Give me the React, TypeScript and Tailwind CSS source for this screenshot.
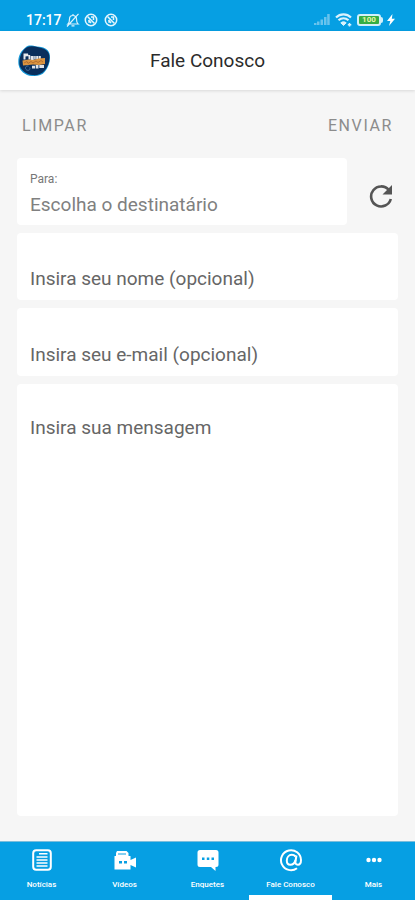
import type { ReactNode } from 'react';

interface NavItem {
  label: string;
  icon: ReactNode;
  active?: boolean;
}

const FIELD = 'block w-full rounded bg-white px-[13px] text-[19px] text-[#5a5a5a] placeholder:text-[#666666] outline-none';

const NAV_ITEMS: NavItem[] = [
  { label: 'Notícias', icon: <NewsIcon /> },
  { label: 'Vídeos', icon: <VideoIcon /> },
  { label: 'Enquetes', icon: <PollIcon /> },
  { label: 'Fale Conosco', icon: <AtIcon />, active: true },
  { label: 'Mais', icon: <MoreIcon /> },
];

export default function App() {
  return (
    <div className="flex min-h-screen flex-col bg-[#f6f6f6] font-['Roboto',sans-serif]">
      <StatusBar />
      <Header />
      <main className="flex flex-1 flex-col px-[17px] pb-[25px]">
        <ContactForm />
      </main>
      <BottomNav />
    </div>
  );
}

function StatusBar() {
  return (
    <div className="flex h-[31px] items-center justify-between bg-[#069fe3] pt-2 pr-5 pl-[26px] text-white">
      <div className="flex items-center gap-1">
        <span className="text-[14px] leading-4 font-medium">17:17</span>
        <BellOffIcon />
        <span className="flex gap-[6px]">
          <BlockedIcon />
          <BlockedIcon />
        </span>
      </div>
      <div className="flex items-center gap-[5px]">
        <svg viewBox="0 0 16 12" className="h-3 w-4" fill="#69c3ed" aria-hidden="true">
          <path d="M0 9h2.500v2H0zM3 7.500h2.500V11H3zM6.500 5.500H9V11H6.500zM10 3h2.500v8H10zM13.200 0H15.700v11h-2.500z" />
        </svg>
        <svg viewBox="0 0 17 14" className="h-[14px] w-[17px]" fill="none" stroke="#d9f2fd" aria-hidden="true">
          <path d="M1 4.500C5.300.4 11.700.4 16 4.500" strokeWidth="2.200" />
          <path d="M3.500 7.300c3-2.700 7-2.700 10 0" strokeWidth="2.200" />
          <path d="M5.800 9.800c1.800-1.400 3.600-1.400 5.400 0L8.500 12.500z" fill="#d9f2fd" strokeWidth="1" />
          <path d="M14.500 10v3.500M12.800 11.700h3.500" strokeWidth="1.500" />
        </svg>
        <span className="flex items-center gap-1">
          <span className="flex items-center">
            <span className="flex h-3 w-6 items-center justify-center rounded-[3px] border-2 border-[#d3f0fa] bg-[#35ae45] text-[8px] leading-none font-bold text-[#e9f7a5]">
              100
            </span>
            <span className="h-[6px] w-[2px] rounded-r bg-[#d3f0fa]" />
          </span>
          <svg viewBox="0 0 8 12" className="h-3 w-2" fill="#fff" aria-hidden="true">
            <path d="M5.500 0 0 7h3.300L2 12l6-7.200H4.800z" />
          </svg>
        </span>
      </div>
    </div>
  );
}

function Header() {
  return (
    <header className="grid h-[59px] grid-cols-[1fr_auto_1fr] items-center bg-white px-[18px] pt-px shadow-[0_1px_3px_rgba(0,0,0,0.12)]">
      <Logo />
      <h1 className="text-[19px] leading-6 text-[#2b2b2b]">Fale Conosco</h1>
    </header>
  );
}

function ContactForm() {
  return (
    <form className="flex flex-1 flex-col" onSubmit={(e) => e.preventDefault()}>
      <div className="flex h-[68px] items-center justify-between px-[5px] pt-[3px] text-[16px] text-[#8c8c8c]">
        <button type="reset" className="tracking-widest">LIMPAR</button>
        <button type="submit" className="tracking-widest">ENVIAR</button>
      </div>
      <div className="flex flex-1 flex-col gap-2">
        <div className="flex">
          <div className="flex h-[67px] flex-1 flex-col rounded bg-white px-[13px] pt-[13px]">
            <label htmlFor="recipient" className="text-[12px] leading-4 text-[#777777]">Para:</label>
            <select id="recipient" className="mt-1 h-7 w-full appearance-none bg-transparent text-[19px] text-[#808080] outline-none">
              <option>Escolha o destinatário</option>
            </select>
          </div>
          <button type="button" aria-label="Atualizar" className="flex w-[51px] items-center justify-end pt-2 pr-[5px]">
            <svg viewBox="0 0 24 24" className="size-6" fill="none" stroke="#555555" strokeWidth="2.600" aria-hidden="true">
              <path d="M19.800 6A10 10 0 1 0 21.800 15" />
              <path d="M23 1v9.500H13.500z" fill="#555555" stroke="none" />
            </svg>
          </button>
        </div>
        <input type="text" aria-label="Insira seu nome (opcional)" placeholder="Insira seu nome (opcional)" className={`${FIELD} h-[67px] pt-6`} />
        <input type="email" aria-label="Insira seu e-mail (opcional)" placeholder="Insira seu e-mail (opcional)" className={`${FIELD} h-[68px] pt-6`} />
        <textarea aria-label="Insira sua mensagem" placeholder="Insira sua mensagem" className={`${FIELD} flex-1 resize-none pt-8 leading-6`} />
      </div>
    </form>
  );
}

function BottomNav() {
  return (
    <nav className="grid h-[59px] grid-cols-5 border-t border-[#7bbddb] bg-[#069fe3] text-white">
      {NAV_ITEMS.map((item) => (
        <a
          key={item.label}
          href="#"
          aria-current={item.active ? 'page' : undefined}
          className={`flex flex-col items-center gap-2 border-b-[5px] pt-[6px] ${item.active ? 'border-white' : 'border-transparent'}`}
        >
          {item.icon}
          <span className="text-[8px] leading-[10px] font-medium whitespace-nowrap">{item.label}</span>
        </a>
      ))}
    </nav>
  );
}

function Logo() {
  return (
    <svg viewBox="0 0 32 32" className="size-8" role="img" aria-label="Logo">
      <path d="M8 2C11-.5 15 1 19 1.500c6 .5 11 2 12.500 7 1.500 6-.5 13-4.500 18-3 4-8 5-13 4.500C7 30.500 1.500 26 .5 19.500-.5 12 2.500 6 8 2z" fill="#1598d8" />
      <path d="M8.500 2.500c4-2 8-1 12-.2 5 .9 10 3 10.800 8 .8 6-1.300 11.500-4.800 15.500-3 3.400-7.500 4.800-12 4.300-6-.7-12-4.800-13-10.300C.8 13 3.500 6 8.500 2.500z" fill="#092e5c" />
      <path d="M5.500 8.500h4.500l.5 2.500-3 .5v3h-2zM10.500 10h1.700v4.500h-1.700zM12.700 11h3v4h-3zM16.200 11h1.500v3.500h-1.500zM18.200 11h1.800v3.500h-1.800zM20.500 11h2.300v3h-2.300z" fill="#e4e7ec" />
      <path d="m4.500 15.500 6-1 5 .5 5-1.500 6.500-.5v6l-6 1-6-.5-10 1z" fill="#dc9440" />
      <path d="m6 18 3-1.500 1 2 3-2 2 1.500 3-2 2 1.500 3-2 2 1.500" fill="none" stroke="#a8652d" strokeWidth=".8" />
      <path d="M14 20.700h3v2.800h-3zM17.700 20h2.800v3.500h-2.800zM21.300 20H26v3h-4.700z" fill="#e1e5ec" />
      <path d="M10.500 21c-3-.5-4 2.500-1.800 4 2 1 4-.5 3-2.500" fill="none" stroke="#4c76a0" />
    </svg>
  );
}

function BellOffIcon() {
  return (
    <svg viewBox="0 0 14 14" className="size-[14px]" fill="none" stroke="#e0f4fd" strokeWidth="1.200" aria-hidden="true">
      <path d="M2 11h10c-1.300-1-1.500-2.500-1.500-5a3.500 3.500 0 0 0-7 0c0 2.500-.2 4-1.500 5zM5.500 12.800h3M7 1v1.500M1 13.500 12.500.8" />
    </svg>
  );
}

function BlockedIcon() {
  return (
    <svg viewBox="0 0 14 14" className="size-[14px]" fill="none" stroke="#e5f6fd" aria-hidden="true">
      <circle cx="7" cy="7" r="5.700" strokeWidth="1.500" />
      <path d="m3.500 3.500 7 7M5 9.800V7M7 4h2.500v3M4.500 7l2.500 3" strokeWidth="1.500" />
    </svg>
  );
}

function NewsIcon() {
  return (
    <svg viewBox="0 0 22 24" className="h-6 w-[22px]" fill="none" stroke="#fff" aria-hidden="true">
      <rect x="2.200" y="2.200" width="17.600" height="19.600" rx="3" strokeWidth="2" />
      <path d="M8 5.700h8.500M5.500 9h11M5.500 12h11M5.500 15h11M5.500 18h11" strokeWidth="1.500" />
    </svg>
  );
}

function VideoIcon() {
  return (
    <svg viewBox="0 0 24 24" className="size-6" fill="#fff" aria-hidden="true">
      <path d="M4 3h9.500l2 2v3h2v4L23 9.500v10L17.500 17v4.500H1.500V8H3V5z" />
      <path d="M5 6h8" stroke="#069fe3" fill="none" />
      <path d="M6 13h3v2.500H6zM11 13h3v2.500h-3z" fill="#069fe3" />
    </svg>
  );
}

function PollIcon() {
  return (
    <svg viewBox="0 0 24 24" className="size-6" fill="#fff" aria-hidden="true">
      <path d="M4 2h16a2.500 2.500 0 0 1 2.500 2.500v12A2.500 2.500 0 0 1 20 19h-.5v4L15 19H4a2.500 2.500 0 0 1-2.500-2.500v-12A2.500 2.500 0 0 1 4 2z" />
      <path d="M6 9.500h2.500V12H6zM10.800 9.500h2.500V12h-2.500zM15.500 9.500H18V12h-2.500z" fill="#069fe3" />
    </svg>
  );
}

function AtIcon() {
  return (
    <svg viewBox="0 0 24 24" className="size-6" fill="none" stroke="#fff" strokeWidth="2" aria-hidden="true">
      <path d="M18 20.200A10 10 0 1 1 22 12c0 3-1.200 4.800-3.200 4.800-2.100 0-2.600-1.500-2.300-3.300l.9-6" />
      <path d="M16.500 8.500c-1-1.200-2.200-1.700-3.700-1.700-3 0-5 2.700-5 5.700 0 2.600 1.300 4.300 3.500 4.300 2.600 0 4.500-2 5.200-4.800" />
    </svg>
  );
}

function MoreIcon() {
  return (
    <svg viewBox="0 0 24 24" className="size-6" fill="#fff" aria-hidden="true">
      <circle cx="6.500" cy="12" r="2.200" />
      <circle cx="12" cy="12" r="2.200" />
      <circle cx="17.500" cy="12" r="2.200" />
    </svg>
  );
}
